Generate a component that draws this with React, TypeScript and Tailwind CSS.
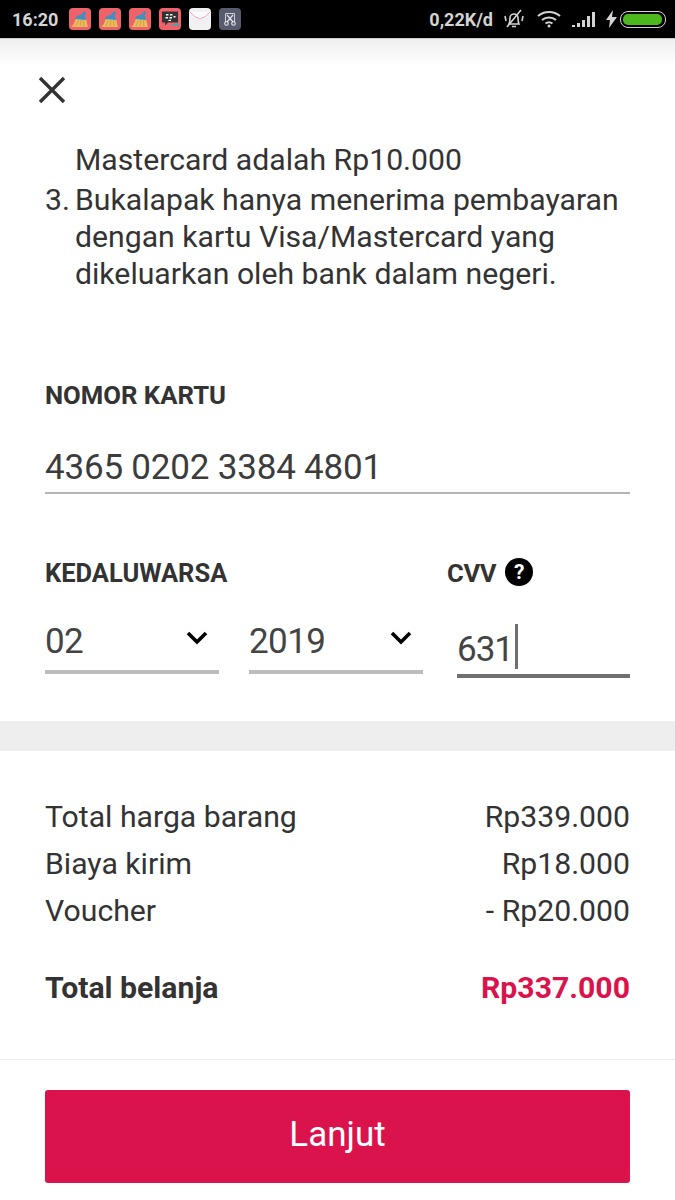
function CleanerIcon() {
  return (
    <svg width="22" height="22" viewBox="0 0 22 22">
      <rect width="22" height="22" rx="4" fill="#f0626a" />
      <path d="M2 19C5 17 6 13 7 10L17 11C18 14 18 17 19 19Z" fill="#e9bd5c" />
      <path d="M7 18l2.500-6M11 18.500l1-6.500M15 18.500l-.5-6" stroke="#c9973e" strokeWidth="0.800" />
      <path d="M6 11C7 8 9 7 11.500 7L15.500 3L17 4.500L15.500 8C16.500 9 17 10 17 12Z" fill="#3f8fc4" />
    </svg>
  );
}

function BbmIcon() {
  return (
    <svg width="22" height="22" viewBox="0 0 22 22">
      <rect width="22" height="22" rx="4" fill="#f0626a" />
      <path d="M3 3.500h16v11H9l-3 3v-3H3z" fill="#333" />
      <path d="M9 17.500h9l1.500 1.500v-4" fill="#3aa7b5" />
      <path d="M7 6h2.500v1.500H7zM11 6h2.500v1.500H11zM6.500 9h2.500v1.500H6.500zM10.500 9H13v1.500h-2.500zM14.500 8h2v1.500h-2zM9.500 11.800h2.500v1.200H9.500z" fill="#fff" />
    </svg>
  );
}

function MailIcon() {
  return (
    <svg width="22" height="22" viewBox="0 0 22 22">
      <rect width="22" height="22" rx="4" fill="#f1f1f3" />
      <path d="M1 4Q11 17 21 4" fill="#fbfbfb" stroke="#f0a9bd" strokeWidth="1" />
    </svg>
  );
}

function ScissorsIcon() {
  return (
    <svg width="22" height="22" viewBox="0 0 22 22">
      <rect width="22" height="22" rx="4" fill="#565b6e" />
      <path d="M6.500 14V5.500h9V14" fill="none" stroke="#cfd0d6" strokeWidth="1" />
      <path d="M8 7l6 7M14 7l-6 7" stroke="#e6e6ea" strokeWidth="1.200" />
      <circle cx="7.500" cy="15.500" r="1.800" fill="none" stroke="#e6e6ea" strokeWidth="1.100" />
      <circle cx="14.500" cy="15.500" r="1.800" fill="none" stroke="#e6e6ea" strokeWidth="1.100" />
    </svg>
  );
}

function StatusBar() {
  return (
    <div className="flex h-[38px] items-center bg-black pl-[12px] pr-[9px] font-['Roboto',sans-serif] text-[18px] font-bold text-[#d4d4d4]">
      <span className="w-[57px]">16:20</span>
      <div className="flex items-center gap-[8px]">
        <CleanerIcon />
        <CleanerIcon />
        <CleanerIcon />
        <BbmIcon />
        <MailIcon />
        <ScissorsIcon />
      </div>
      <div className="ml-auto flex items-center">
        <span>0,22K/d</span>
        <svg className="ml-[10px]" width="22" height="22" viewBox="0 0 22 22" fill="none" stroke="#d4d4d4" strokeWidth="1.600">
          <path d="M6 16c1-2 1-4 1-6 0-2.500 2-4 4-4s4 1.500 4 4c0 2 0 4 1 6z" />
          <path d="M9 18.500h4M18 2L4 19M2 8l1 5M20 8l-1 5" />
        </svg>
        <svg className="ml-[12px]" width="24" height="18" viewBox="0 0 24 18" fill="none" stroke="#d4d4d4" strokeWidth="2">
          <path d="M1 6c6-5.500 16-5.500 22 0M5 10c4-3.500 10-3.500 14 0M8.500 13.500c2-1.500 5-1.500 7 0" />
          <circle cx="12" cy="16" r="1.500" fill="#d4d4d4" stroke="none" />
        </svg>
        <svg className="ml-[11px]" width="24" height="16" viewBox="0 0 24 16" fill="#d4d4d4">
          <path d="M0 14h3v2H0zM5 12h3v4H5zM10 9h3v7h-3zM15 5h3v11h-3zM20 1h3v15h-3z" />
        </svg>
        <svg className="ml-[10px]" width="11" height="18" viewBox="0 0 11 18" fill="#d4d4d4">
          <path d="M7 0L0 10h4l-1 8 8-11H6z" />
        </svg>
        <div className="ml-[3px] h-[17px] w-[46px] rounded-[8px] border border-[#d4d4d4] p-[2px] pr-[3px]">
          <div className="h-full w-full rounded-[5px] bg-[#4db81e]" />
        </div>
      </div>
    </div>
  );
}

function SelectField({ value, className }: { value: string; className: string }) {
  return (
    <div className={`flex h-[55px] items-center justify-between border-b-[4px] border-[#bcbcbc] pb-[6px] ${className}`}>
      <span className="text-[35px] leading-none font-normal tracking-[-0.6px] text-[#444444]">{value}</span>
      <svg className="mr-[11px] mb-[7px]" width="22" height="14" viewBox="0 0 22 14" fill="none" stroke="#000" strokeWidth="3.600">
        <path d="M2 2l9 9 9-9" />
      </svg>
    </div>
  );
}

function PriceRow({ label, price }: { label: string; price: string }) {
  return (
    <div className="flex h-[47px] items-center justify-between text-[30.200px]">
      <span>{label}</span>
      <span>{price}</span>
    </div>
  );
}

export default function App() {
  return (
    <div className="flex h-[1200px] w-[675px] flex-col overflow-hidden bg-white font-['Roboto',sans-serif] text-[#333333]">
      <StatusBar />

      <div className="h-[28px] border-t border-[#c9c9c9] bg-gradient-to-b from-[#efefef] to-white" />
      <div className="pt-[8px] pb-[35px] pl-[36px]">
        <svg className="block" width="32" height="32" viewBox="0 0 32 32" stroke="#333" strokeWidth="3.400" fill="none">
          <path d="M4 4l24 24M28 4L4 28" />
        </svg>
      </div>

      <div className="px-[45px] text-[30.200px] leading-[37px]">
        <p className="pl-[30px]">Mastercard adalah Rp10.000</p>
        <div className="mt-[3px] flex">
          <span className="w-[30px] shrink-0">3.</span>
          <p>
            Bukalapak hanya menerima pembayaran dengan kartu Visa/Mastercard yang dikeluarkan oleh bank dalam negeri.
          </p>
        </div>

        <h2 className="mt-[88px] text-[25.700px] leading-[30px] font-bold">NOMOR KARTU</h2>
        <div className="mt-[32px] h-[52px] border-b-2 border-[#b5b5b5] text-[35px] leading-[52px] tracking-[-0.2px] text-[#3c3c3c]">4365 0202 3384 4801</div>

        <div className="mt-[64px] flex">
          <div className="w-[402px] shrink-0">
            <h2 className="text-[25.500px] leading-[30px] font-bold">KEDALUWARSA</h2>
            <div className="mt-[31px] flex">
              <SelectField value="02" className="w-[174px]" />
              <SelectField value="2019" className="ml-[30px] w-[174px]" />
            </div>
          </div>
          <div className="flex-1">
            <div className="flex items-center gap-[9px]">
              <h2 className="text-[25.700px] leading-[30px] font-bold tracking-[-0.4px]">CVV</h2>
              <div className="mb-[2px] flex h-[28px] w-[28px] items-center justify-center rounded-full bg-black text-[21px] font-bold text-white">?</div>
            </div>
            <div className="mt-[33px] ml-[10px] flex h-[57px] border-b-[4px] border-[#707070]">
              <span className="pt-[9px] text-[35px] leading-[40px] font-normal tracking-[-1px] text-[#444444]">631</span>
              <div className="ml-[2px] mt-[3px] h-[45px] w-[3px] bg-[#707070]" />
            </div>
          </div>
        </div>
      </div>

      <div className="mt-[43px] h-[30px] bg-[#eeeeee]" />

      <div className="border-b border-[#eeeeee] px-[45px] pt-[42px] pb-[54px]">
        <PriceRow label="Total harga barang" price="Rp339.000" />
        <PriceRow label="Biaya kirim" price="Rp18.000" />
        <PriceRow label="Voucher" price="- Rp20.000" />
        <div className="mt-[37px] flex items-center justify-between text-[30.200px] leading-[34px] font-bold">
          <span>Total belanja</span>
          <span className="text-[#db134c]">Rp337.000</span>
        </div>
      </div>

      <div className="px-[45px] pt-[30px]">
        <button className="h-[93px] w-full rounded-[3px] bg-[#db134c] pb-[2px] text-[35px] text-white">Lanjut</button>
      </div>
    </div>
  );
}
